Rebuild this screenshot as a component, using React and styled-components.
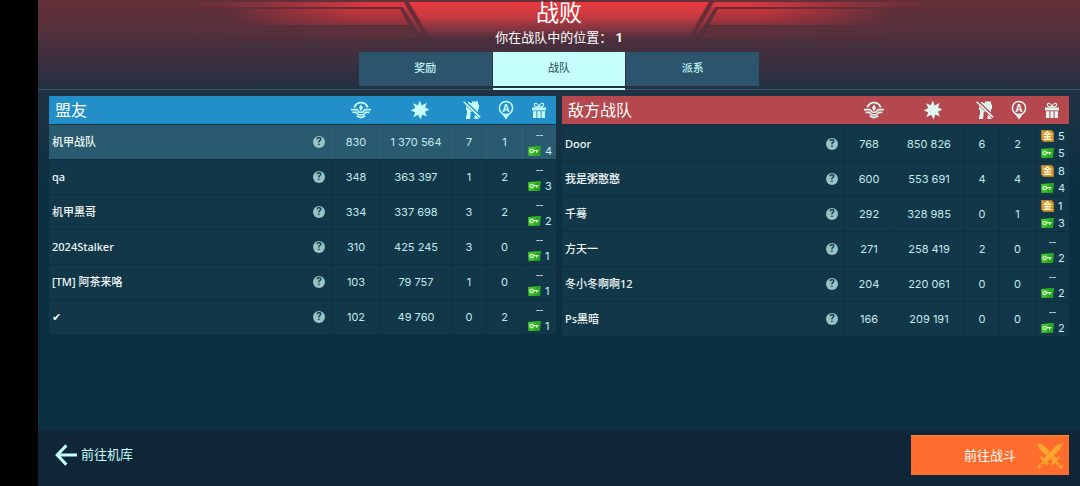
import React, { useState } from 'react'
import styled, { createGlobalStyle } from 'styled-components'

const allies = [
    { name: '机甲战队', honor: '830', damage: '1 370 564', kills: 7, beacons: 1, keys: 4, me: true },
    { name: 'qa', honor: '348', damage: '363 397', kills: 1, beacons: 2, keys: 3 },
    { name: '机甲黑哥', honor: '334', damage: '337 698', kills: 3, beacons: 2, keys: 2 },
    { name: '2024Stalker', honor: '310', damage: '425 245', kills: 3, beacons: 0, keys: 1 },
    { name: '[TM] 阿茶来咯', honor: '103', damage: '79 757', kills: 1, beacons: 0, keys: 1 },
    { name: '✔', honor: '102', damage: '49 760', kills: 0, beacons: 2, keys: 1 },
]

const enemies = [
    { name: 'Door', honor: '768', damage: '850 826', kills: 6, beacons: 2, gold: 5, keys: 5 },
    { name: '我是粥憨憨', honor: '600', damage: '553 691', kills: 4, beacons: 4, gold: 8, keys: 4 },
    { name: '千蓦', honor: '292', damage: '328 985', kills: 0, beacons: 1, gold: 1, keys: 3 },
    { name: '方天一', honor: '271', damage: '258 419', kills: 2, beacons: 0, keys: 2 },
    { name: '冬小冬啊啊12', honor: '204', damage: '220 061', kills: 0, beacons: 0, keys: 2 },
    { name: 'Ps黑暗', honor: '166', damage: '209 191', kills: 0, beacons: 0, keys: 2 },
]

const tabs = ['奖励', '战队', '派系']

const HonorIcon = () => (
    <svg width="20" height="18" viewBox="0 0 20 18" fill="none" stroke="currentColor">
        <path d="M3.4 6.6A6.9 6.9 0 0 1 16.6 6.6" strokeWidth="1.8" />
        <path d="M5.6 15L10 16.6L14.4 15" strokeWidth="1.8" />
        <path d="M0 8.6H6L8.2 11.2H11.8L14 8.6H20" strokeWidth="1.6" />
        <path d="M1.6 11.4H5.2L7.6 13.8H12.4L14.8 11.4H18.4" strokeWidth="1.6" />
        <path d="M10 3.4L12 6.8L10 10.4L8 6.8Z" fill="currentColor" stroke="none" />
    </svg>
)

const DamageIcon = () => (
    <svg width="20" height="20" viewBox="0 0 20 20" fill="currentColor">
        <path d="M9.8 0.4L11.8 5.4L16.8 2.8L15 7.4L19.4 9.4L15 11.8L17 16.6L12.4 14.6L10.4 19.4L8.2 14.8L3.4 17.2L5.2 12.2L0.6 10.4L5.2 8L3 3.2L7.8 5.2Z" />
    </svg>
)

const KillIcon = () => (
    <svg width="18" height="20" viewBox="0 0 18 20" fill="currentColor">
        <path d="M3 4H5V2H7V3H9V1.4H15V4.4H16V9H15V12L15.6 14V19H11.4V17L12 15V12H7.6V15L7 19H3V17L4 14V10H3Z" />
        <path d="M1.8 1L18 16.2" stroke="var(--head)" strokeWidth="1.6" />
        <path d="M0 2.8L16.2 18" stroke="var(--head)" strokeWidth="1" />
        <path d="M0.6 1.8L17.2 17.4" stroke="currentColor" strokeWidth="1.5" />
    </svg>
)

const BeaconIcon = () => (
    <svg width="16" height="20" viewBox="0 0 16 20" fill="currentColor">
        <circle cx="8" cy="8" r="6.6" fill="none" stroke="currentColor" strokeWidth="1.5" />
        <path d="M4 14H12L8 19.6Z" />
        <text x="8" y="11.6" fontSize="10" fontWeight="700" textAnchor="middle">A</text>
    </svg>
)

const GiftIcon = () => (
    <svg width="14" height="17" viewBox="0 0 14 17" fill="currentColor">
        <path d="M7 4.8C3.6 5.2 1.8 3.8 2.4 2.2C3.2 0.4 6.2 1.6 7 4.8C7.8 1.6 10.8 0.4 11.6 2.2C12.2 3.8 10.4 5.2 7 4.8Z" fill="none" stroke="currentColor" strokeWidth="1.1" />
        <path d="M0 5.4H14V8.4H0Z" />
        <path d="M1 9.2H4.4V16H1ZM5.4 9.2H8.6V16H5.4ZM9.6 9.2H13V16H9.6Z" />
    </svg>
)

const KeyIcon = () => (
    <svg width="13" height="10" viewBox="0 0 13 10">
        <path d="M0 1L12.6 0L12 9.4L0.4 10Z" fill="#3cc02d" />
        <path d="M8 0.4L12.6 0L12 9.4L6 9.7Z" fill="#28a822" />
        <circle cx="3.6" cy="4.9" r="1.7" fill="none" stroke="#e4ffd2" strokeWidth="1.1" />
        <path d="M5.2 4.6H10.4M8.6 4.6V6.8" stroke="#e4ffd2" strokeWidth="1.2" />
    </svg>
)

const GoldIcon = () => (
    <svg width="13" height="12" viewBox="0 0 13 12">
        <path d="M0 0H10.6L13 2.4V12H2.4L0 9.6Z" fill="#b67d24" />
        <path d="M1 1H10L12 3V11H3L1 9Z" fill="#cf9838" />
        <text x="6.5" y="9.4" fontSize="9" fontWeight="700" fill="#fff3cd" textAnchor="middle">金</text>
    </svg>
)

const ArrowIcon = () => (
    <svg width="22" height="22" viewBox="0 0 22 22" fill="none" stroke="currentColor" strokeWidth="3">
        <path d="M11.4 1.4L2.2 11L11.4 20.6M2.2 11H22" />
    </svg>
)

const SwordsIcon = () => (
    <svg width="28" height="28" viewBox="0 0 28 28" fill="#fba62c">
        <path d="M1 1L7.6 3.2L20.6 16.6L17 20L3.4 7.2Z" />
        <path d="M22.4 14L24.2 15.8L16.8 23.2L15 21.4Z" />
        <path d="M21 19.4L23.4 21.6L21.6 23.4L19.2 21Z" />
        <path d="M24.6 22.4L27 24.8L24.8 27L22.4 24.6Z" />
        <path d="M27 1L20.4 3.2L7.4 16.6L11 20L24.6 7.2Z" stroke="#ff6d2e" strokeWidth="0.6" />
        <path d="M5.6 14L3.8 15.8L11.2 23.2L13 21.4Z" />
        <path d="M7 19.4L4.6 21.6L6.4 23.4L8.8 21Z" />
        <path d="M3.4 22.4L1 24.8L3.2 27L5.6 24.6Z" />
    </svg>
)

const Glow = () => (
    <Backdrop viewBox="0 0 1042 90" preserveAspectRatio="xMidYMin slice" aria-hidden="true">
        <defs>
            <linearGradient id="core" x1="0" y1="0" x2="0" y2="1">
                <stop offset="0" stopColor="#e93a3e" />
                <stop offset="0.4" stopColor="#cf3a42" stopOpacity="0.92" />
                <stop offset="0.75" stopColor="#963841" stopOpacity="0.6" />
                <stop offset="1" stopColor="#70303c" stopOpacity="0" />
            </linearGradient>
            <linearGradient id="left" gradientUnits="userSpaceOnUse" x1="150" y1="0" x2="330" y2="0">
                <stop offset="0" stopColor="#e0383e" stopOpacity="0" />
                <stop offset="0.4" stopColor="#e0383e" stopOpacity="0.3" />
                <stop offset="1" stopColor="#e0383e" stopOpacity="0.95" />
            </linearGradient>
            <linearGradient id="inner" gradientUnits="userSpaceOnUse" x1="190" y1="0" x2="320" y2="0">
                <stop offset="0" stopColor="#d8363e" stopOpacity="0" />
                <stop offset="0.5" stopColor="#d8363e" stopOpacity="0.5" />
                <stop offset="1" stopColor="#d8363e" stopOpacity="0.9" />
            </linearGradient>
            <linearGradient id="line" gradientUnits="userSpaceOnUse" x1="0" y1="0" x2="0" y2="40">
                <stop offset="0" stopColor="#6b2b37" />
                <stop offset="0.5" stopColor="#6b2b37" stopOpacity="0.9" />
                <stop offset="1" stopColor="#6b2b37" stopOpacity="0" />
            </linearGradient>
            <linearGradient id="fade" x1="0" y1="0" x2="0" y2="1">
                <stop offset="0" stopColor="#fff" />
                <stop offset="1" stopColor="#fff" stopOpacity="0.4" />
            </linearGradient>
            <mask id="soft">
                <rect x="0" y="9" width="521" height="17" fill="url(#fade)" />
            </mask>
            <g id="wing">
                <path d="M120 2H366L369 7H120Z" fill="url(#left)" />
                <path d="M120 9H362L371 25H120Z" fill="url(#inner)" mask="url(#soft)" />
                <path d="M150 27H372L379 38H150Z" fill="url(#left)" opacity="0.08" />
                <path d="M160 8H363L382 39" fill="none" stroke="url(#line)" strokeWidth="2" opacity="0.6" />
                <path d="M364 6H368L388 38H384Z" fill="url(#core)" opacity="0.7" />
                <path d="M368 1L390 38" stroke="url(#line)" strokeWidth="4" />
            </g>
        </defs>
        <path d="M370 2H672L650 40H392Z" fill="url(#core)" />
        <use href="#wing" />
        <use href="#wing" transform="translate(1042 0) scale(-1 1)" />
    </Backdrop>
)

function Team({ title, side, players }) {
    return (
        <Table $side={side}>
            <thead>
                <HeadRow $side={side}>
                    <th scope="col">{title}</th>
                    <th scope="col" aria-label="荣誉"><HonorIcon /></th>
                    <th scope="col" aria-label="伤害"><DamageIcon /></th>
                    <th scope="col" aria-label="击毁"><KillIcon /></th>
                    <th scope="col" aria-label="信标"><BeaconIcon /></th>
                    <th scope="col" aria-label="奖励"><GiftIcon /></th>
                </HeadRow>
            </thead>
            <tbody>
                {players.map(player => (
                    <Row key={player.name} $me={player.me}>
                        <NameCell>
                            <span>{player.name}</span>
                            <HelpButton type="button">?</HelpButton>
                        </NameCell>
                        <Cell>{player.honor}</Cell>
                        <Cell>{player.damage}</Cell>
                        <Cell>{player.kills}</Cell>
                        <Cell>{player.beacons}</Cell>
                        <RewardCell>
                            {player.gold ? <Reward><GoldIcon />{player.gold}</Reward> : <NoReward>--</NoReward>}
                            <Reward><KeyIcon />{player.keys}</Reward>
                        </RewardCell>
                    </Row>
                ))}
            </tbody>
        </Table>
    )
}

export default function App() {
    const [active, setActive] = useState('战队')
    return (
        <Screen>
            <GlobalStyle />
            <Header>
                <Glow />
                <Title>战败</Title>
                <Place>你在战队中的位置： <b>1</b></Place>
                <Tabs>
                    {tabs.map(tab => (
                        <Tab key={tab} type="button" $active={tab === active} onClick={() => setActive(tab)}>{tab}</Tab>
                    ))}
                </Tabs>
            </Header>
            <Teams>
                <Team title="盟友" side="ally" players={allies} />
                <Team title="敌方战队" side="enemy" players={enemies} />
            </Teams>
            <Footer>
                <BackButton type="button"><ArrowIcon />前往机库</BackButton>
                <BattleButton type="button">
                    <span>前往战斗</span>
                    <SwordsIcon />
                </BattleButton>
            </Footer>
        </Screen>
    )
}

const GlobalStyle = createGlobalStyle`
    * {
        box-sizing: border-box;
    }
    body {
        margin: 0;
        background-color: #000;
        color: #e6f7f8;
        font-family: Roboto, "Noto Sans CJK SC", "DejaVu Sans", sans-serif;
    }
    button {
        border: none;
        padding: 0;
        font-family: inherit;
        cursor: pointer;
    }
    svg {
        display: block;
        flex-shrink: 0;
    }
`

const Screen = styled.div`
    display: flex;
    flex-direction: column;
    min-height: 100vh;
    margin-left: 38px;
    background: linear-gradient(#203244 90px, #0c3042 180px, #0b2e40 340px, #0b3142);
`

const Header = styled.header`
    position: relative;
    display: flex;
    flex-direction: column;
    align-items: center;
    background: linear-gradient(#64303a, #56303b 28px, #442f3e 50px, #253144 88px);
    border-bottom: 1px solid #2f5766;
`

const Backdrop = styled.svg`
    position: absolute;
    top: 0;
    left: 0;
    width: 100%;
    height: 90px;
`

const Title = styled.h1`
    position: relative;
    margin: 0;
    color: #fff;
    font-size: 23px;
    font-weight: 400;
    line-height: 28px;
`

const Place = styled.p`
    position: relative;
    margin: 0;
    color: #fff;
    font-size: 13px;
    font-weight: 400;
    line-height: 20px;
    white-space: pre;
`

const Tabs = styled.nav`
    position: relative;
    display: flex;
    gap: 1px;
    width: 400px;
    margin-top: 4px;
`

const Tab = styled.button`
    flex: 1;
    height: 34px;
    margin-bottom: 3px;
    color: ${({ $active }) => ($active ? '#1d4a55' : '#bff3f3')};
    background-color: ${({ $active }) => ($active ? '#c4fffc' : '#2c556d')};
    box-shadow: ${({ $active }) => ($active ? '0 2px #26303f, 0 4px #c4fffc' : 'none')};
    font-size: 11px;
    font-weight: ${({ $active }) => ($active ? 400 : 500)};
    line-height: 16px;
`

const Teams = styled.main`
    flex: 1;
    display: flex;
    align-items: flex-start;
    gap: 6px;
    padding: 6px 11px 16px;
`

const Table = styled.table`
    --head: ${({ $side }) => ($side === 'ally' ? '#238fc8' : '#b5484e')};
    display: block;
    flex: 1;
    min-width: 0;
    font-family: "Noto Sans", "Noto Sans CJK SC", "DejaVu Sans", sans-serif;
    thead, tbody {
        display: block;
    }
    tbody {
        padding-top: ${({ $side }) => ($side === 'ally' ? '1px' : '3px')};
    }
`

const HeadRow = styled.tr`
    display: grid;
    grid-template-columns: 1fr 48px 70px 34px 33px 34px;
    height: 28px;
    color: ${({ $side }) => ($side === 'ally' ? '#c5ffff' : '#dff6f2')};
    background-color: var(--head);
    th {
        display: flex;
        align-items: center;
        justify-content: center;
        padding: 0;
    }
    th:first-child {
        justify-content: flex-start;
        padding-left: 6px;
        color: #fff;
        font-size: 16px;
        font-weight: 400;
        line-height: 24px;
    }
`

const Row = styled.tr`
    display: grid;
    grid-template-columns: 1fr 49px 71px 35px 36px 34px;
    height: 35px;
    border-bottom: 1px solid #0d3041;
    background-color: ${({ $me }) => ($me ? '#295a70' : '#113748')};
    td {
        display: flex;
        align-items: center;
        justify-content: center;
        padding: 0;
    }
    td + td {
        border-left: 1px solid ${({ $me }) => ($me ? '#31647a' : '#0d3142')};
    }
`

const Cell = styled.td`
    color: #c2ebee;
    font-family: Inter, "Noto Sans", sans-serif;
    font-size: 11px;
    line-height: 16px;
`

const NameCell = styled.td`
    && {
        justify-content: space-between;
        padding: 0 6px 0 3px;
    }
    color: #f0f8f8;
    font-size: 11px;
    font-weight: 500;
    line-height: 16px;
`

const HelpButton = styled.button`
    width: 12px;
    height: 12px;
    border-radius: 50%;
    color: #123a4a;
    background-color: #98c3c5;
    font-family: Roboto, sans-serif;
    font-size: 11px;
    font-weight: 700;
    line-height: 12px;
`

const RewardCell = styled.td`
    && {
        flex-direction: column;
        align-items: stretch;
        padding: 0 5px;
    }
    color: #c9f1f2;
    font-family: Inter, "Noto Sans", "Noto Sans CJK SC", sans-serif;
    font-size: 11px;
    line-height: 16px;
`

const Reward = styled.div`
    display: flex;
    align-items: center;
    gap: 4px;
    height: 17px;
`

const NoReward = styled(Reward)`
    justify-content: center;
    font-family: "Noto Sans", sans-serif;
`

const Footer = styled.footer`
    display: flex;
    align-items: center;
    justify-content: space-between;
    height: 56px;
    padding: 0 11px 6px 17px;
    background-color: #0f2538;
`

const BackButton = styled.button`
    display: flex;
    align-items: center;
    gap: 4px;
    color: #c5ffff;
    background-color: transparent;
    font-size: 13px;
    line-height: 20px;
`

const BattleButton = styled.button`
    display: grid;
    grid-template-columns: 1fr auto 1fr;
    align-items: center;
    width: 158px;
    height: 40px;
    padding: 0 5px;
    color: #fff;
    background-color: #ff6d2e;
    border-top: 1px solid #f58b2f;
    font-size: 13px;
    line-height: 20px;
    span {
        grid-column: 2;
    }
    svg {
        justify-self: end;
    }
`
